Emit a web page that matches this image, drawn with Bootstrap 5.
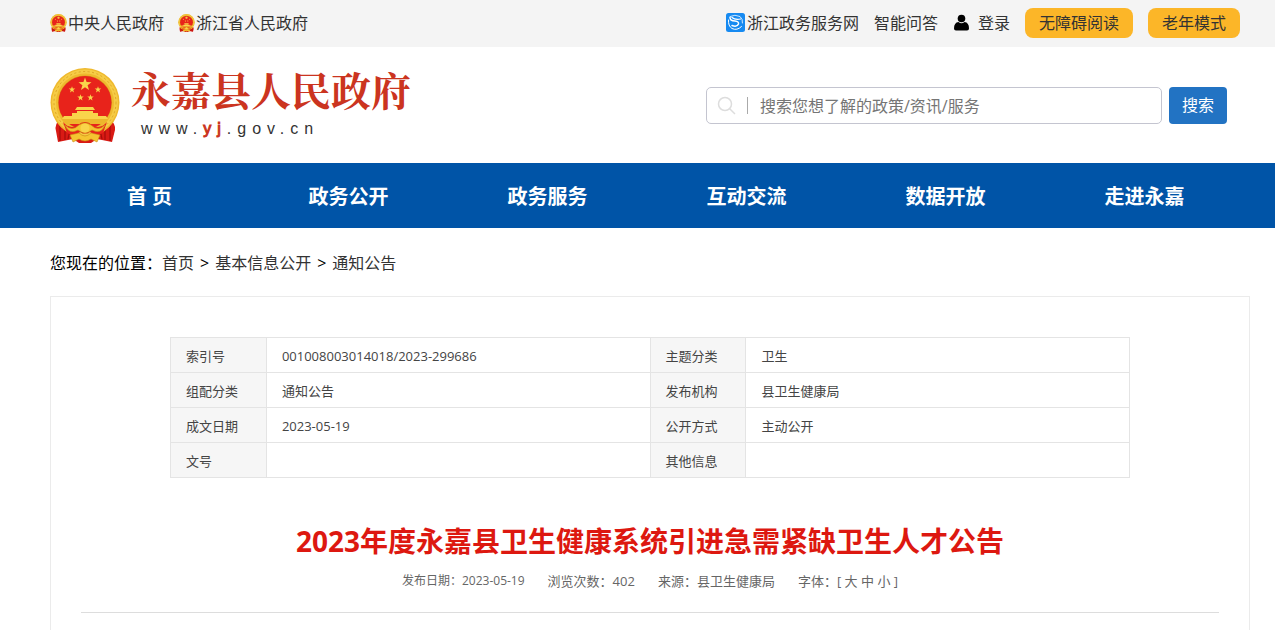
<!DOCTYPE html>
<html lang="zh-CN">
<head>
<meta charset="utf-8">
<meta name="viewport" content="width=device-width, initial-scale=1">
<title>2023年度永嘉县卫生健康系统引进急需紧缺卫生人才公告</title>
<link href="https://cdn.jsdelivr.net/npm/bootstrap@5.3.0/dist/css/bootstrap.min.css" rel="stylesheet">
<style>
  body { font-family: "Open Sans", "Noto Sans CJK SC", sans-serif; font-size: 16px; line-height: 24px; color: #000; background: #fff; }
  a { color: #333; text-decoration: none; }
  .page-wrap { padding-left: 50px; padding-right: 25px; }
  .top-strip { background: #f4f4f4; height: 47px; padding-bottom: 2px; }
  .top-links { gap: 14px; }
  .top-links a { gap: 1px; }
  .top-tools { gap: 15px; padding-right: 10px; }
  .service-link { gap: 2px; }
  .pill { background: #fcb628; color: #333; border: 0; border-radius: 8px; height: 30px; padding: 0 14px; line-height: 30px; font-size: 16px; }
  .masthead { height: 116px; }
  .site-name { font-family: "Noto Serif CJK SC", "Noto Sans CJK SC", serif; font-weight: 700; font-size: 40px; line-height: 48px; color: #cb3420; }
  .site-url { font-family: "Liberation Sans", sans-serif; font-size: 16px; line-height: 20px; letter-spacing: 6px; color: #333; padding: 6px 0 6px 10px; }
  .site-url span { color: #cb3420; -webkit-text-stroke: 1px #cb3420; }
  .brand { gap: 11px; }
  .search-area { width: 521px; gap: 7px; margin-right: 23px; }
  .search-box { height: 37px; border: 1px solid #c4c5d0; border-radius: 5px; padding-left: 10px; }
  .search-box input { border: 0; outline: 0; color: #333; background: none; padding: 2px 12px 0; }
  .search-box input::placeholder { color: #757575; opacity: 1; }
  .search-rule { width: 1px; height: 17px; background: #aaa; margin-left: 11px; }
  .search-btn { width: 58px; height: 37px; border: 0; border-radius: 4px; background: #2273c3; color: #fff; }
  .main-nav { background: #0054a7; }
  .main-nav ul { padding-right: 6px; }
  .main-nav a { color: #fff; font-size: 20px; font-weight: 700; line-height: 63px; padding: 2px 0 0; }
  .main-nav a:hover { color: #fff; }
  .crumbs { padding-top: 23px; padding-bottom: 21px; }
  .crumb-mark { margin: 0 6px; }
  .article-box { border: 1px solid #ebebeb; border-bottom: 0; padding: 40px 30px 0; min-height: 334px; }
  .info-wrap { padding: 0 89px; }
  .info-table { table-layout: fixed; border-collapse: collapse; font-size: 13px; line-height: 20px; color: #444; }
  .info-table th, .info-table td { border: 1px solid #e4e4e4; height: 35px; padding: 1px 15px 0; font-weight: 400; }
  .info-table th { background: #f6f6f6; }
  .info-table .label-col { width: 10%; }
  .headline { font-size: 28px; line-height: 40px; font-weight: 700; color: #dd1810; margin-top: 43px; }
  .meta-line { font-size: 13px; line-height: 20px; color: #666; gap: 23px; padding: 10px 0 21px; border-bottom: 1px solid #ddd; }
  .meta-line a { color: #666; }
  .meta-date { font-size: 12px; }
</style>
</head>
<body>
<svg width="0" height="0" class="d-none" aria-hidden="true">
  <symbol id="emblem" viewBox="0 0 70 75">
    <path d="M11 50Q4 56 6 63L8 74 23 71 29 75H41L47 71 62 74 65 62Q66 56 59 50Z" fill="#d91a14"/>
    <path d="M10 57V73M15 59V72M20 62 18 71M60 57V73M55 59V72M50 62 52 71" stroke="#a50d0b" stroke-width="1.2" fill="none"/>
    <circle cx="35" cy="34.5" r="34.5" fill="#efb92e"/>
    <circle cx="35" cy="34.5" r="31" fill="none" stroke="#f6cc45" stroke-width="4"/>
    <circle cx="35" cy="34.5" r="31" fill="none" stroke="#dea527" stroke-width="1" stroke-dasharray="2 2.5"/>
    <circle cx="35" cy="34.5" r="27" fill="#d99b1d"/>
    <circle cx="35" cy="34.5" r="26.5" fill="#e8231b"/>
    <g fill="#f9d44b">
      <path id="star" d="M35 9.5 36.6 14 41.5 14.2 37.600 17.200 39 22 35 19.200 31 22 32.400 17.200 28.500 14.200 33.400 14Z"/>
      <use href="#star" transform="translate(4.500 13.500) scale(.5)"/>
      <use href="#star" transform="translate(30.500 13.500) scale(.5)"/>
      <use href="#star" transform="translate(13 21.500) scale(.5)"/>
      <use href="#star" transform="translate(23 21.500) scale(.5)"/>
      <path d="M27 39H43L45 42H25ZM27 43H43V45H48V48H22V45H27ZM14 48H56L58 51H12Z"/>
      <path d="M12 51H58L55 56H15Z" fill="#edb72c"/>
    </g>
    <path d="M13 54Q20 62 28 57Q31 54 35 54Q39 54 42 57Q50 62 57 54L53 65Q46 69 40 64Q35 67 30 64Q24 69 17 65Z" fill="#e8231b"/>
    <path d="M15 57Q22 64 29 57Q35 53 41 57Q48 64 55 57Q51 67 42 62Q35 68 28 62Q19 67 15 57ZM20 67 29 65Q35 71 41 65L50 67 47 74 41 71Q35 75 29 71L23 74Z" fill="#f5c431" stroke="#c98c14" stroke-width=".6"/>
    <circle cx="35" cy="60" r="4.500" fill="#f9d44b"/>
  </symbol>
</svg>

<div class="top-strip d-flex align-items-center">
  <div class="page-wrap container-fluid d-flex justify-content-between align-items-center">
    <div class="top-links d-flex">
      <a href="#" class="d-flex align-items-center"><svg width="17" height="18" aria-hidden="true"><use href="#emblem"/></svg>中央人民政府</a>
      <a href="#" class="d-flex align-items-center"><svg width="17" height="18" aria-hidden="true"><use href="#emblem"/></svg>浙江省人民政府</a>
    </div>
    <div class="top-tools d-flex align-items-center">
      <a href="#" class="service-link d-flex align-items-center"><svg width="19" height="19" viewBox="0 0 19 19" aria-hidden="true"><rect width="19" height="19" rx="2.5" fill="#168af1"/><g fill="none" stroke="#fff" stroke-linecap="round"><path d="M2.500 7Q2 13 6 15.500Q11 18 15.500 13.500" stroke-width="1"/><path d="M4 3.500Q9 1 14 3.500Q17 6 16.500 10" stroke-width=".8"/><path d="M4 4.500Q4 8 9 8Q13 8.500 12.500 11Q11 14.500 6 12.500" stroke-width="1.500"/><path d="M6 4.500Q9 7 14.500 6" stroke-width="1.200"/></g></svg>浙江政务服务网</a>
      <a href="#">智能问答</a>
      <a href="#" class="d-flex align-items-center"><svg width="17" height="17" viewBox="0 0 17 17" class="me-2" aria-hidden="true"><circle cx="8.500" cy="4.500" r="3.800" fill="#000"/><path d="M5.500 8Q8.500 10.500 11.500 8Q16 8.500 16 14.500Q16 16.500 14 16.500H3Q1 16.500 1 14.500Q1 8.500 5.500 8Z" fill="#000"/></svg>登录</a>
      <button type="button" class="pill">无障碍阅读</button>
      <button type="button" class="pill">老年模式</button>
    </div>
  </div>
</div>

<header class="masthead page-wrap d-flex justify-content-between align-items-center">
  <a href="#" class="brand d-flex align-items-center">
    <svg width="70" height="75" role="img" aria-label="国徽"><use href="#emblem"/></svg>
    <span class="d-block">
      <span class="site-name d-block">永嘉县人民政府</span>
      <span class="site-url d-block">www.<span>yj</span>.gov.cn</span>
    </span>
  </a>
  <form class="search-area d-flex" role="search">
    <div class="search-box d-flex align-items-center flex-grow-1">
      <svg width="19" height="19" viewBox="0 0 19 19" fill="none" stroke="#ddd" stroke-width="1.5" aria-hidden="true"><circle cx="8" cy="8" r="6.5"/><path d="M12.5 12.5 18 18"/></svg>
      <span class="search-rule"></span>
      <input type="text" class="flex-grow-1" aria-label="搜索" placeholder="搜索您想了解的政策/资讯/服务">
    </div>
    <button type="submit" class="search-btn p-0">搜索</button>
  </form>
</header>

<nav class="main-nav">
  <div class="page-wrap">
    <ul class="nav nav-justified flex-nowrap">
      <li class="nav-item"><a class="nav-link" href="#">首 页</a></li>
      <li class="nav-item"><a class="nav-link" href="#">政务公开</a></li>
      <li class="nav-item"><a class="nav-link" href="#">政务服务</a></li>
      <li class="nav-item"><a class="nav-link" href="#">互动交流</a></li>
      <li class="nav-item"><a class="nav-link" href="#">数据开放</a></li>
      <li class="nav-item"><a class="nav-link" href="#">走进永嘉</a></li>
    </ul>
  </div>
</nav>

<main class="page-wrap">
  <div class="crumbs d-flex">
    <span>您现在的位置：</span><a href="#">首页</a><span class="crumb-mark">&gt;</span><a href="#">基本信息公开</a><span class="crumb-mark">&gt;</span><a href="#">通知公告</a>
  </div>
  <article class="article-box">
    <div class="info-wrap">
      <table class="info-table w-100">
        <colgroup><col class="label-col"><col><col class="label-col"><col></colgroup>
        <tbody>
          <tr><th scope="row">索引号</th><td>001008003014018/2023-299686</td><th scope="row">主题分类</th><td>卫生</td></tr>
          <tr><th scope="row">组配分类</th><td>通知公告</td><th scope="row">发布机构</th><td>县卫生健康局</td></tr>
          <tr><th scope="row">成文日期</th><td>2023-05-19</td><th scope="row">公开方式</th><td>主动公开</td></tr>
          <tr><th scope="row">文号</th><td></td><th scope="row">其他信息</th><td></td></tr>
        </tbody>
      </table>
    </div>
    <h1 class="headline text-center mb-0">2023年度永嘉县卫生健康系统引进急需紧缺卫生人才公告</h1>
    <div class="meta-line d-flex justify-content-center">
      <span class="meta-date">发布日期：2023-05-19</span>
      <span>浏览次数：402</span>
      <span>来源：县卫生健康局</span>
      <span>字体：[ <a href="#">大</a> <a href="#">中</a> <a href="#">小</a> ]</span>
    </div>
  </article>
</main>
<script src="https://cdn.jsdelivr.net/npm/bootstrap@5.3.0/dist/js/bootstrap.bundle.min.js"></script>
</body>
</html>
